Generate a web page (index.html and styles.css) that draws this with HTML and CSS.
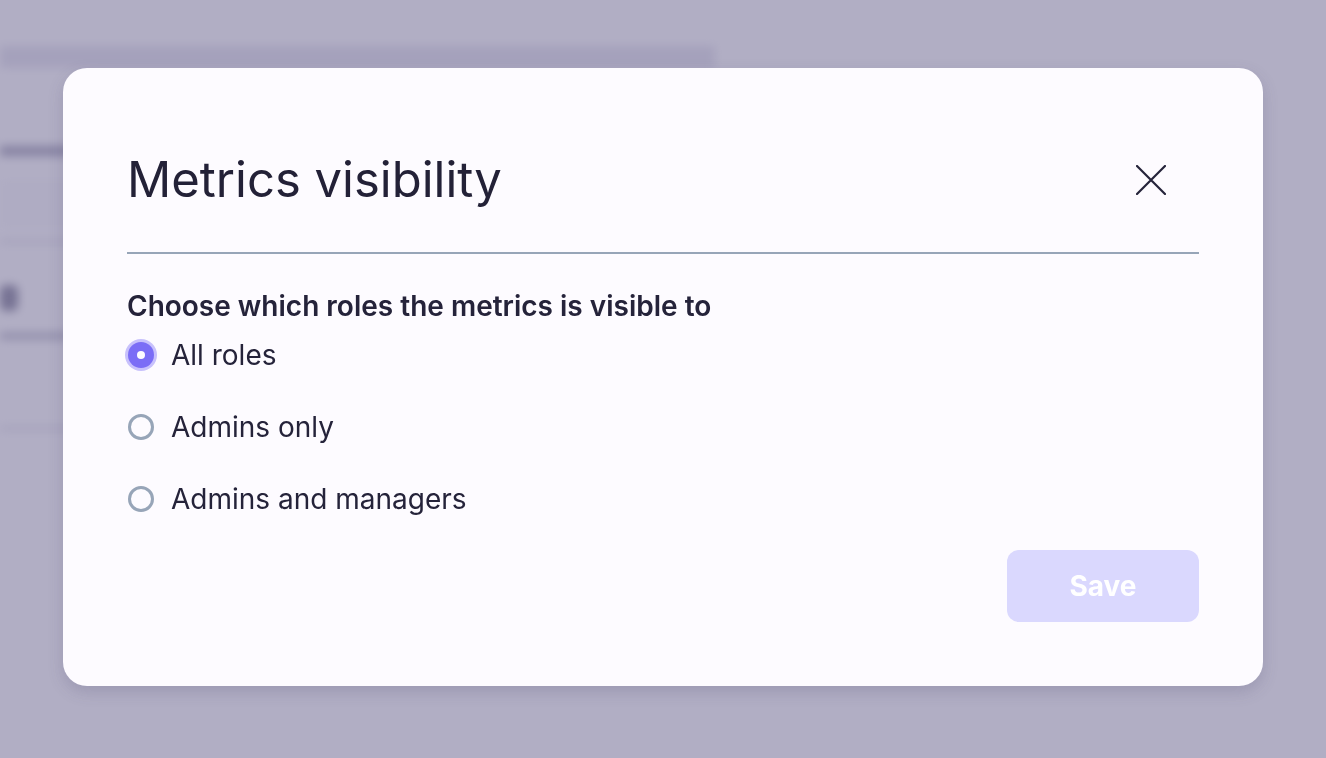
FILE: index.html
```html
<!DOCTYPE html>
<html lang="en">
<head>
<meta charset="utf-8">
<title>Metrics visibility</title>
<link rel="stylesheet" href="styles.css">
</head>
<body>
<div class="backdrop-page" aria-hidden="true">
  <div class="bg-top"></div>
  <div class="bg-panel">
    <div class="bg-line bg-l1"></div>
    <div class="bg-field"></div>
    <div class="bg-line bg-l2"></div>
    <div class="bg-blob"></div>
    <div class="bg-line bg-l3"></div>
    <div class="bg-line bg-l4"></div>
  </div>
</div>
<div class="overlay">
  <div class="modal" role="dialog" aria-labelledby="mtitle">
    <div class="modal-header">
      <h1 id="mtitle" class="modal-title">Metrics visibility</h1>
      <button class="close-btn" aria-label="Close">
        <svg width="30" height="30" viewBox="0 0 30 30"><path d="M1 1L29 29M29 1L1 29" stroke="#25233a" stroke-width="2.2" stroke-linecap="round" fill="none"/></svg>
      </button>
    </div>
    <p class="modal-subtitle">Choose which roles the metrics is visible to</p>
    <div class="radio-group">
      <label class="radio-row"><span class="radio checked"></span><span class="radio-label">All roles</span></label>
      <label class="radio-row"><span class="radio"></span><span class="radio-label">Admins only</span></label>
      <label class="radio-row"><span class="radio"></span><span class="radio-label">Admins and managers</span></label>
    </div>
    <div class="modal-footer">
      <button class="save-btn" disabled>Save</button>
    </div>
  </div>
</div>
</body>
</html>
```
FILE: styles.css
```css
html, body {
  margin: 0;
  padding: 0;
  height: 100%;
}
body {
  font-family: Inter, "Noto Sans", sans-serif;
  background: #ffffff;
  overflow: hidden;
}
.backdrop-page {
  filter: blur(5px);
  height: 100%;
}
.bg-top {
  height: 46px;
  background: #ffffff;
}
.bg-panel {
  width: 715px;
  height: 700px;
  border-top: 22px solid #e6e5ee;
  display: flex;
  flex-direction: column;
}
.bg-line {
  background: #b9b8c8;
  height: 8px;
}
.bg-l1 { width: 100px; margin-top: 78px; background: #a8a6ba; height: 10px; }
.bg-field { height: 48px; margin-top: 24px; background: #fafafc; }
.bg-l2 { width: 400px; height: 3px; margin-top: 12px; background: #d8d7e2; }
.bg-blob { width: 18px; height: 26px; margin-top: 42px; background: #8a889e; border-radius: 6px; }
.bg-l3 { width: 70px; height: 6px; margin-top: 22px; background: #b5b4c4; }
.bg-l4 { width: 400px; height: 3px; margin-top: 88px; background: #d8d7e2; }

.overlay {
  position: fixed;
  inset: 0;
  background: rgba(99, 94, 138, 0.5);
  display: flex;
  align-items: center;
  justify-content: center;
}
.modal {
  width: 1200px;
  box-sizing: border-box;
  padding: 64px;
  background: #fdfbff;
  border-radius: 24px;
  box-shadow: 0 6px 16px rgba(60, 55, 100, 0.18);
  display: flex;
  flex-direction: column;
  margin-bottom: 4px;
}
.modal-header {
  height: 96px;
  padding-bottom: 24px;
  border-bottom: 2px solid #97a5b8;
  display: flex;
  align-items: center;
  justify-content: space-between;
}
.modal-title {
  margin: 0;
  font-size: 49px;
  font-weight: 400;
  line-height: 58px;
  color: #232137;
}
.close-btn {
  background: none;
  border: 0;
  padding: 0;
  margin-right: 33px;
  width: 30px;
  height: 30px;
  cursor: pointer;
  display: flex;
}
.modal-subtitle {
  margin: 36px 0 9px;
  font-size: 28px;
  line-height: 32px;
  font-weight: 600;
  color: #25233a;
}
.radio-group {
  display: flex;
  flex-direction: column;
  gap: 24px;
}
.radio-row {
  height: 48px;
  display: flex;
  align-items: center;
  cursor: pointer;
}
.radio {
  width: 26px;
  height: 26px;
  box-sizing: border-box;
  border: 3px solid #97a5b8;
  border-radius: 50%;
  margin-left: 1px;
  flex: none;
  display: flex;
  align-items: center;
  justify-content: center;
}
.radio.checked {
  border: 0;
  background: #7b6df6;
  box-shadow: 0 0 0 3px #c8c1fc;
}
.radio.checked::after {
  content: "";
  width: 8px;
  height: 8px;
  border-radius: 50%;
  background: #fdfbff;
}
.radio-label {
  margin-left: 17px;
  font-size: 28px;
  line-height: 32px;
  color: #25233a;
}
.modal-footer {
  margin-top: 27px;
  display: flex;
  justify-content: flex-end;
}
.save-btn {
  width: 192px;
  height: 72px;
  border: 0;
  border-radius: 12px;
  background: #dad8fe;
  color: #ffffff;
  font-family: Inter, "Noto Sans", sans-serif;
  font-size: 28px;
  font-weight: 700;
}
```
